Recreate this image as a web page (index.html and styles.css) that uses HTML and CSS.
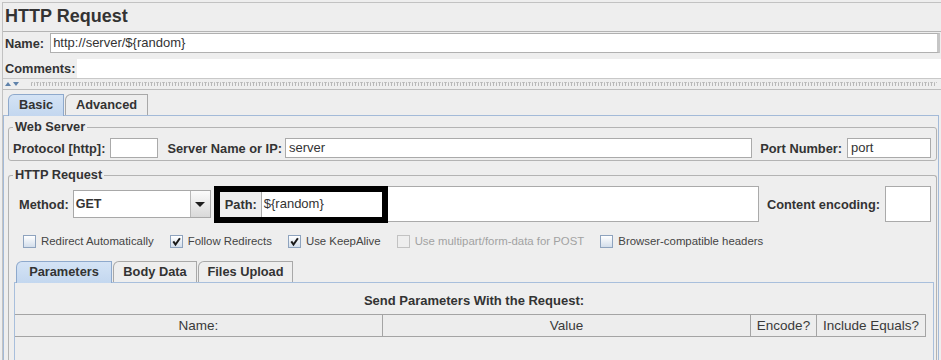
FILE: index.html
```html
<!DOCTYPE html>
<html>
<head>
<meta charset="utf-8">
<title>HTTP Request</title>
<link rel="stylesheet" href="styles.css">
</head>
<body>
<div class="frame">
  <div class="title">HTTP Request</div>
  <div class="namepanel">
    <div class="name-row">
      <span class="lbl pad">Name:</span>
      <div class="name-field">http://server/${random}</div>
    </div>
    <div class="comments-row">
      <span class="lbl pad">Comments:</span>
      <div class="comments-field"></div>
    </div>
  </div>
  <div class="splitter">
    <span class="arr up"></span>
    <span class="arr down"></span>
    <span class="dots"></span>
  </div>
  <div class="tabsec">
    <div class="tabs outer-tabs">
      <div class="tab sel t-basic">Basic</div>
      <div class="tab t-adv">Advanced</div>
    </div>
    <div class="outer-panel">
      <fieldset class="group ws">
        <legend>Web Server</legend>
        <div class="ws-row">
          <span class="lbl">Protocol [http]:</span>
          <div class="tf proto"></div>
          <span class="lbl server-lbl">Server Name or IP:</span>
          <div class="tf server">server</div>
          <span class="lbl port-lbl">Port Number:</span>
          <div class="tf port">port</div>
        </div>
      </fieldset>
      <fieldset class="group req">
        <legend>HTTP Request</legend>
        <div class="method-row">
          <span class="lbl">Method:</span>
          <div class="combo">
            <span class="combo-text">GET</span>
            <span class="combo-btn"><span class="tri"></span></span>
          </div>
          <div class="pathgrp">
            <span class="lbl">Path:</span>
            <div class="tf path">${random}</div>
            <div class="annot"></div>
          </div>
          <span class="lbl enc-lbl">Content encoding:</span>
          <div class="tf enc"></div>
        </div>
        <div class="check-row">
          <label class="cb"><span class="box"></span>Redirect Automatically</label>
          <label class="cb"><span class="box"><svg viewBox="0 0 11 11" width="11" height="11"><path d="M2.3 5.4 L4.5 8.6 L8.9 2.2" fill="none" stroke="#1a1a1a" stroke-width="2"/></svg></span>Follow Redirects</label>
          <label class="cb"><span class="box"><svg viewBox="0 0 11 11" width="11" height="11"><path d="M2.3 5.4 L4.5 8.6 L8.9 2.2" fill="none" stroke="#1a1a1a" stroke-width="2"/></svg></span>Use KeepAlive</label>
          <label class="cb dis"><span class="box"></span>Use multipart/form-data for POST</label>
          <label class="cb"><span class="box"></span>Browser-compatible headers</label>
        </div>
        <div class="tabs inner-tabs">
          <div class="tab sel t-par">Parameters</div>
          <div class="tab t-body">Body Data</div>
          <div class="tab t-files">Files Upload</div>
        </div>
        <div class="inner-panel">
          <div class="ptitle">Send Parameters With the Request:</div>
          <div class="table">
            <div class="th">Name:</div>
            <div class="th">Value</div>
            <div class="th">Encode?</div>
            <div class="th">Include Equals?</div>
          </div>
        </div>
      </fieldset>
    </div>
  </div>
</div>
</body>
</html>
```
FILE: styles.css
```css
* { box-sizing: border-box; }
html, body { margin: 0; padding: 0; }
body {
  background: #eeeeee;
  font-family: "Liberation Sans", Arial, sans-serif;
  color: #333333;
  width: 941px;
  height: 360px;
  overflow: hidden;
}
.frame {
  margin: 2px 0 0 2px;
  border-top: 1px solid #c2c2c2;
  border-left: 1px solid #c2c2c2;
}
.title {
  height: 28px;
  padding-left: 2px;
  font-size: 18px;
  font-weight: bold;
  line-height: 26px;
}
.lbl {
  font-weight: bold;
  font-size: 12.8px;
  white-space: nowrap;
  color: #333333;
}
.lbl.pad { padding-left: 2px; }

/* name / comments */
.namepanel {
  border-top: 1px solid #b4b4b4;
  padding-top: 1px;
}
.name-row {
  display: flex;
  align-items: center;
  height: 20px;
}
.name-field {
  flex: 1;
  margin-left: 6px;
  margin-right: 1px;
  height: 20px;
  background: #ffffff;
  border: 1px solid #b0b0b0;
  border-right: 3px solid #c6c6c6;
  font-size: 13px;
  line-height: 18px;
  padding-left: 2px;
}
.comments-row {
  display: flex;
  align-items: center;
  height: 19px;
  margin-top: 6px;
}
.comments-field {
  flex: 1;
  margin-left: 2px;
  height: 19px;
  background: #ffffff;
}

/* splitter */
.splitter {
  height: 12px;
  border-top: 1px solid #c8c8c8;
  border-bottom: 1px solid #bdbdbd;
  display: flex;
  align-items: center;
  padding-left: 2px;
}
.arr {
  width: 0;
  height: 0;
  border-left: 3px solid transparent;
  border-right: 3px solid transparent;
  margin-right: 2px;
}
.arr.up { border-bottom: 4px solid #5f82aa; }
.arr.down { border-top: 4px solid #5f82aa; }
.dots {
  flex: 1;
  height: 4px;
  margin-left: 10px;
  margin-right: 4px;
  background-image:
    repeating-linear-gradient(90deg, #b8b8b8 0 1px, transparent 1px 3px);
  border-top: 1px dotted #c4c4c4;
}

/* tabs */
.tabsec { padding-top: 4px; }
.tabs {
  display: flex;
  gap: 1px;
  height: 21px;
  position: relative;
  z-index: 1;
}
.tab {
  font-weight: bold;
  font-size: 12.8px;
  line-height: 19px;
  text-align: center;
  color: #333333;
  border: 1px solid #a8a8a8;
  border-bottom: none;
  border-top-left-radius: 6px;
  background: #eeeeee;
  height: 21px;
}
.tab.sel {
  background: linear-gradient(#d4e3f5, #c3d7ef);
  border-color: #8ea9cc;
  height: 22px;
}
.outer-tabs { padding-left: 5px; }
.t-basic { width: 56px; }
.t-adv { width: 83px; }

.outer-panel {
  border: 1px solid #a3bad8;
  border-bottom: none;
  margin-right: 2px;
  padding: 4px 1px 0 4px;
  height: 245px;
}

/* groups */
.group {
  margin: 0;
  min-width: 0;
  border: 1px solid #b3b3b3;
  border-radius: 3px;
  padding: 4px 5px 2px 4px;
}
.group legend {
  font-weight: bold;
  font-size: 12.8px;
  line-height: 14px;
  padding: 0 2px;
  color: #333333;
}
.req {
  margin-top: 7px;
  padding-bottom: 0;
  height: 192px;
  border-bottom: none;
  border-bottom-left-radius: 0;
  border-bottom-right-radius: 0;
}

.tf {
  height: 20px;
  background: #ffffff;
  border: 1px solid #aaaaaa;
  font-size: 13px;
  line-height: 18px;
  padding-left: 3px;
  color: #333333;
}
.ws-row {
  display: flex;
  align-items: center;
  height: 20px;
}
.proto { width: 48px; margin-left: 5px; }
.server-lbl { margin-left: 9px; }
.server { flex: 1; margin-left: 3px; }
.port-lbl { margin-left: 8px; }
.port { width: 84px; margin-left: 5px; }

/* method row */
.method-row {
  display: flex;
  align-items: center;
  height: 36px;
  padding-left: 6px;
}
.combo {
  display: flex;
  width: 138px;
  height: 28px;
  margin-left: 4px;
  background: #ffffff;
  border: 1px solid #a8a8a8;
}
.combo-text {
  flex: 1;
  font-weight: bold;
  font-size: 12.5px;
  line-height: 26px;
  padding-left: 2px;
}
.combo-btn {
  width: 20px;
  border-left: 1px solid #b8b8b8;
  background: linear-gradient(#fbfbfb, #d9d9d9);
  display: flex;
  align-items: center;
  justify-content: center;
}
.tri {
  width: 0;
  height: 0;
  border-left: 5px solid transparent;
  border-right: 5px solid transparent;
  border-top: 5px solid #1e1e1e;
}
.pathgrp {
  position: relative;
  flex: 1;
  display: flex;
  align-items: center;
  height: 36px;
  margin-left: 14px;
}
.path {
  flex: 1;
  height: 36px;
  line-height: 34px;
  margin-left: 4px;
  padding-left: 2px;
}
.annot {
  position: absolute;
  left: -11px;
  top: 0;
  width: 174px;
  height: 37px;
  border: 6px solid #000000;
  pointer-events: none;
}
.enc-lbl { margin-left: 8px; }
.enc { width: 46px; height: 36px; margin-left: 5px; }

/* checkboxes */
.check-row {
  display: flex;
  align-items: center;
  height: 14px;
  margin-top: 12px;
  padding-left: 10px;
}
.cb {
  display: flex;
  align-items: center;
  margin-right: 16px;
  font-size: 11.4px;
  color: #444444;
  white-space: nowrap;
}
.box {
  width: 13px;
  height: 13px;
  margin-right: 5px;
  border: 1px solid #8ea3be;
  background: linear-gradient(#ffffff, #d3deeb);
  display: flex;
  align-items: center;
  justify-content: center;
}
.cb.dis { color: #a2a2a2; }
.cb.dis .box { border-color: #c2c2c2; background: #eeeeee; }

/* inner tabs */
.inner-tabs { margin-top: 13px; padding-left: 3px; }
.t-par { width: 96px; }
.t-body { width: 84px; }
.t-files { width: 95px; }
.inner-panel {
  margin-left: 1px;
  margin-right: -3px;
  border: 1px solid #a8bfdc;
  border-bottom: none;
  height: 78px;
}
.ptitle {
  text-align: center;
  font-weight: bold;
  font-size: 13px;
  line-height: 18px;
  margin-top: 9px;
}
.table {
  display: grid;
  grid-template-columns: 368px 368px 66px 109px;
  margin-top: 4px;
}
.th {
  height: 23px;
  border-top: 1px solid #a4a4a4;
  border-bottom: 1px solid #a4a4a4;
  border-right: 1px solid #a4a4a4;
  background: #ededed;
  text-align: center;
  font-size: 13.5px;
  line-height: 21px;
  color: #3a3a3a;
}
```
